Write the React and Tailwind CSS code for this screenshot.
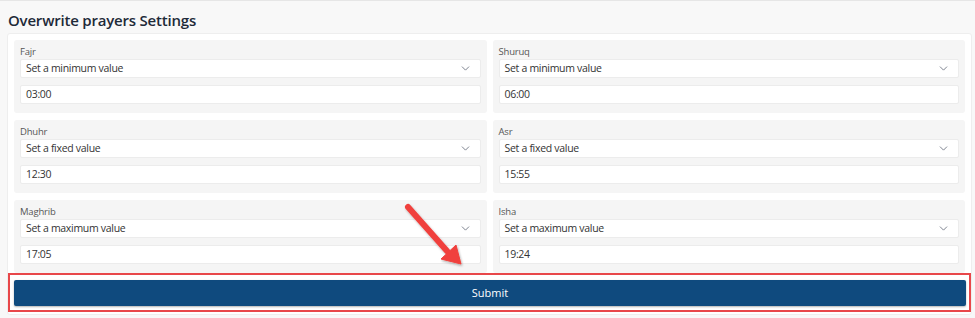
import { ChevronDown } from 'lucide-react'

const prayers = [
  { name: 'Fajr', mode: 'Set a minimum value', time: '03:00' },
  { name: 'Shuruq', mode: 'Set a minimum value', time: '06:00' },
  { name: 'Dhuhr', mode: 'Set a fixed value', time: '12:30' },
  { name: 'Asr', mode: 'Set a fixed value', time: '15:55' },
  { name: 'Maghrib', mode: 'Set a maximum value', time: '17:05' },
  { name: 'Isha', mode: 'Set a maximum value', time: '19:24' },
]

function PrayerField({ prayer }) {
  return (
    <div className="bg-[#f5f5f5] rounded-[3px] px-[6px] pt-[5px] pb-[9px]">
      <p className="text-[9.5px] leading-[14px] tracking-[-0.2px] text-[#555]">{prayer.name}</p>
      <div className="h-[19px] bg-white border border-[#ececec] rounded-[2px] flex items-center justify-between pl-[5px] pr-[8px]">
        <span className="text-[10.5px] tracking-[-0.3px] text-[#333]">{prayer.mode}</span>
        <ChevronDown size={13} strokeWidth={1.6} className="text-[#6b7280]" />
      </div>
      <div className="mt-[7px] h-[19px] bg-white border border-[#ececec] rounded-[2px] flex items-center pl-[5px]">
        <span className="text-[10.5px] tracking-[-0.3px] text-[#333]">{prayer.time}</span>
      </div>
    </div>
  )
}

export default function App() {
  return (
    <div className="relative w-[975px] h-[318px] bg-[#f8f8f8] border-t border-[#e6e6e6] overflow-hidden" style={{ fontFamily: '"Open Sans", "Noto Sans", sans-serif' }}>
      <div className="h-[32px] flex items-center pt-[7px] pl-[8px]">
        <h1 className="text-[15px] font-semibold tracking-[-0.2px] text-[#1e2a38] leading-none">Overwrite prayers Settings</h1>
      </div>
      <div className="ml-[7px] mr-[3px] bg-white border border-[#eeeeee] rounded-[3px] pt-[6px] px-[6px] pb-[2px]">
        <div className="grid grid-cols-2 gap-x-[6px] gap-y-[7px]">
          {prayers.map(p => (
            <PrayerField key={p.name} prayer={p} />
          ))}
        </div>
        {/* highlighted submit */}
        <div className="-mx-[6px] border-2 border-[#e8474a] pl-[4px] pr-[3px] py-[4px]">
          <button className="w-full h-[26px] bg-[#0f4a7e] rounded-[2px] text-white text-[11px] shadow-[0_1px_2px_rgba(0,0,0,0.3)]">
            Submit
          </button>
        </div>
      </div>

      {/* annotation arrow */}
      <svg className="absolute left-0 top-0 pointer-events-none" width="975" height="318">
        <defs>
          <filter id="sh" x="-20%" y="-20%" width="140%" height="140%">
            <feDropShadow dx="1" dy="1.5" stdDeviation="1.2" floodColor="#000" floodOpacity="0.3" />
          </filter>
        </defs>
        <g filter="url(#sh)" fill="#f0403c" stroke="#f0403c">
          <line x1="408" y1="206" x2="447" y2="250" strokeWidth="6" strokeLinecap="round" />
          <polygon points="461,263 441,258 456,244" strokeWidth="1" strokeLinejoin="round" />
        </g>
      </svg>
    </div>
  )
}
